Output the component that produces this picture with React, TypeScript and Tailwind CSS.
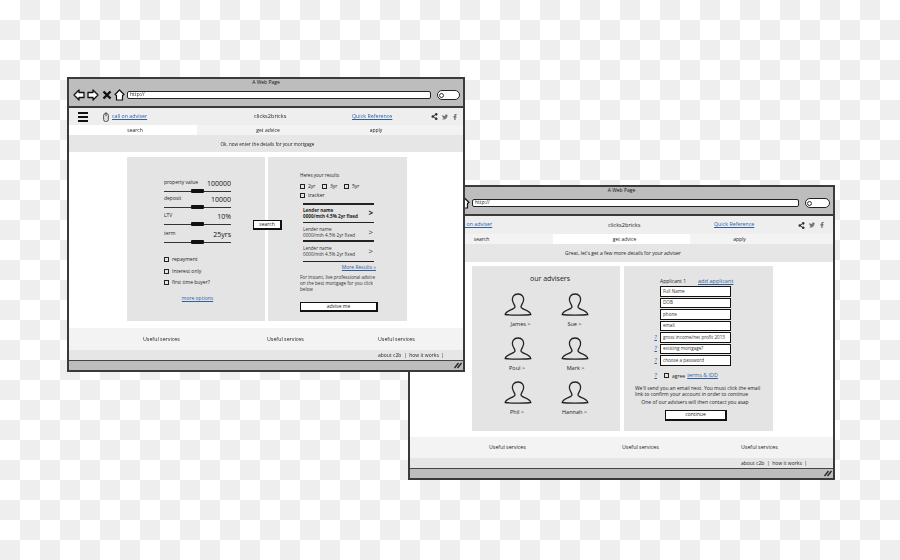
import type { ReactNode } from "react";
import { FaFacebookF, FaShareAlt, FaTwitter } from "react-icons/fa";

function Back({ flip }: { flip?: boolean }) {
  return (
    <svg width="12" height="12" viewBox="0 0 12 12" className={flip ? "-scale-x-100" : ""}>
      <path d="M1 6 L6 1 V3.5 H11 V8.5 H6 V11 Z" fill="#fff" stroke="#111" strokeWidth="1.3" strokeLinejoin="round" />
    </svg>
  );
}

function BrowserBar({ barClass, urlClass, pillClass }: { barClass: string; urlClass: string; pillClass: string }) {
  return (
    <div className="h-[29px] shrink-0 bg-[#bdbdbd] border-b-2 border-[#3a3a3a] flex flex-col">
      <div className="h-[7px] text-center text-[5px] leading-[7px] text-[#111]">A Web Page</div>
      <div className={`flex items-center mt-[3px] ${barClass}`}>
        <Back />
        <div className="w-[2px]" />
        <Back flip />
        <svg width="10" height="10" viewBox="0 0 10 10" className="ml-[3px]">
          <path d="M1.5 1.5 L8.5 8.5 M8.5 1.5 L1.5 8.5" stroke="#111" strokeWidth="2.4" />
        </svg>
        <svg width="11" height="12" viewBox="0 0 11 12" className="ml-[2px]">
          <path d="M5.5 1 L10 5.5 L8.5 6.5 V11 H2.5 V6.5 L1 5.5 Z" fill="#fff" stroke="#111" strokeWidth="1.2" strokeLinejoin="round" />
        </svg>
        <div className={`h-[8px] ml-[2px] bg-white border-[1.5px] border-[#222] rounded-[2px] flex items-center pl-[2px] text-[5px] text-[#222] ${urlClass}`}>
          http://
        </div>
        <div className={`h-[10px] ml-[6px] bg-white border-[1.5px] border-[#222] rounded-full flex items-center pl-[1px] ${pillClass}`}>
          <div className="w-[5px] h-[5px] rounded-full border border-[#333]" />
        </div>
      </div>
    </div>
  );
}

function SocialIcons() {
  return (
    <div className="flex items-center gap-[4px] text-[#333]">
      <FaShareAlt size={7} />
      <FaTwitter size={6} className="text-[#777]" />
      <FaFacebookF size={6} className="text-[#666]" />
    </div>
  );
}

function Hamburger() {
  return (
    <div className="w-[10px] flex flex-col gap-[2px]">
      <div className="h-[2px] bg-[#111]" />
      <div className="h-[2px] bg-[#111]" />
      <div className="h-[2px] bg-[#111]" />
    </div>
  );
}

function MouseIcon() {
  return (
    <svg width="6" height="10" viewBox="0 0 6 10">
      <rect x="0.6" y="1.5" width="4.8" height="8" rx="2" fill="#ddd" stroke="#333" strokeWidth="0.8" />
      <path d="M3 0 V4" stroke="#333" strokeWidth="0.8" />
    </svg>
  );
}

function Link({ children, className = "" }: { children: ReactNode; className?: string }) {
  return <span className={`text-[#2f5f9e] underline whitespace-nowrap ${className}`}>{children}</span>;
}

function Slider({ label, value, labelClass }: { label: string; value: string; labelClass: string }) {
  return (
    <div className="w-[67px]">
      <div className={`flex justify-between items-end ${labelClass}`}>
        <span className="text-[5px] leading-[8px] mb-[2px]">{label}</span>
        <span className="text-[7px] leading-[9px] text-[#111]">{value}</span>
      </div>
      <div className="flex items-center h-[6px]">
        <div className="w-[27px] h-px bg-[#333]" />
        <div className="w-[13px] h-[4px] bg-[#111] rounded-[1px]" />
        <div className="flex-1 h-px bg-[#333]" />
      </div>
    </div>
  );
}

function Check({ label, className = "" }: { label: string; className?: string }) {
  return (
    <div className={`flex items-center gap-[3px] text-[5px] leading-[6px] ${className}`}>
      <div className="w-[5px] h-[5px] border border-[#222]" />
      <span>{label}</span>
    </div>
  );
}

function Lender({ bold, rowClass }: { bold?: boolean; rowClass: string }) {
  return (
    <div className={`w-[71px] flex items-center justify-between ml-[3px] ${rowClass} ${bold ? "font-bold" : "text-[#333]"}`}>
      <div className="text-[4.6px] leading-[6px] whitespace-nowrap">
        <div>Lender name</div>
        <div>0000/mth 4.5% 2yr fixed</div>
      </div>
      <span className="text-[8px] leading-[8px] mr-[1px]">&gt;</span>
    </div>
  );
}

function Rule() {
  return <div className="w-[71px] h-[1.5px] ml-[3px] bg-[#222]" />;
}

function SketchButton({ children, className = "" }: { children: ReactNode; className?: string }) {
  return (
    <div className={`bg-white border border-[#111] border-r-2 border-b-2 flex items-center justify-center text-[5px] text-[#222] ${className}`}>
      {children}
    </div>
  );
}

function Person({ name, labelClass }: { name: string; labelClass: string }) {
  return (
    <div className="h-[44px] w-[57px] flex flex-col items-center">
      <svg width="28" height="23" viewBox="0 0 28 23">
        <path
          d="M14 1 C9.5 1 8 4.5 8.5 7.5 C9 10.5 11 12 11 14 C11 16.5 2 17 1.2 21.5 C5 22.3 23 22.3 26.8 21.5 C26 17 17 16.5 17 14 C17 12 19 10.5 19.5 7.5 C20 4.5 18.5 1 14 1 Z"
          fill="none"
          stroke="#222"
          strokeWidth="1.3"
        />
      </svg>
      <span className={`text-[5.5px] leading-[8px] mt-[4px] whitespace-nowrap text-[#222] ${labelClass}`}>{name}</span>
    </div>
  );
}

function Field({ label, help }: { label: string; help?: boolean }) {
  return (
    <div className="flex items-center h-[10.5px] mb-px">
      <span className="w-[25px] pr-[3px] text-right text-[6px] text-[#2f5f9e] underline">{help ? "?" : ""}</span>
      <div className="w-[71px] h-[10.5px] bg-white border border-[#111] border-r-[1.5px] border-b-[1.5px] flex items-center pl-[2px] text-[4.6px] text-[#333] whitespace-nowrap">
        {label}
      </div>
    </div>
  );
}

function StatusBar() {
  return (
    <div className="flex-1 bg-[#bdbdbd] border-t border-[#444] flex items-center justify-end pr-[1px]">
      <svg width="8" height="7" viewBox="0 0 8 7">
        <path d="M0.5 6 L4.5 1 M3.5 6 L7.5 1" stroke="#222" strokeWidth="1.3" />
      </svg>
    </div>
  );
}

function FirstWindow() {
  return (
    <div className="absolute z-10 left-[67px] top-[77px] w-[398px] h-[295px] border-2 border-[#3a3a3a] bg-white flex flex-col">
      <BrowserBar barClass="pl-[4px]" urlClass="w-[304px]" pillClass="w-[23px]" />
      <div className="h-[17px] shrink-0 bg-[#eeeeee] flex items-center text-[5.3px] text-[#222]">
        <div className="w-[185px] flex items-center shrink-0">
          <div className="ml-[9px]"><Hamburger /></div>
          <div className="ml-[15px]"><MouseIcon /></div>
          <Link className="ml-[3px]">call on adviser</Link>
        </div>
        <span className="w-[98px] shrink-0 text-[5.6px]">clicks2bricks</span>
        <Link className="w-[79px] shrink-0">Quick Reference</Link>
        <SocialIcons />
      </div>
      <div className="h-[10px] shrink-0 flex text-[5px] leading-[10px] text-center text-[#222]">
        <div className="w-[128px] bg-white pl-[4px]">search</div>
        <div className="w-[134px] bg-[#f3f3f3] pl-[8px]">get advice</div>
        <div className="flex-1 bg-[#f3f3f3] pr-[42px]">apply</div>
      </div>
      <div className="h-[17px] shrink-0 bg-[#e6e6e6] flex items-center justify-center pl-[3px] pt-[1px] text-[4.6px] text-[#222]">
        Ok, now enter the details for your mortgage
      </div>
      <div className="h-[176px] shrink-0 relative flex gap-[3px] pl-[58px] pt-[5px] text-[#222]">
        <div className="w-[138px] h-[164px] bg-[#e4e4e4] pl-[37px] pt-[19px]">
          <Slider label="property value" value="100000" labelClass="h-[12px]" />
          <Slider label="deposit" value="10000" labelClass="h-[10px]" />
          <Slider label="LTV" value="10%" labelClass="h-[11px]" />
          <Slider label="term" value="25yrs" labelClass="h-[12px]" />
          <Check label="repayment" className="mt-[11px]" />
          <Check label="Interest only" className="mt-[6px]" />
          <Check label="first time buyer?" className="mt-[5px]" />
          <div className="mt-[10px] w-[67px] text-center text-[5px] leading-[6px]"><Link>more options</Link></div>
        </div>
        <div className="w-[139px] h-[164px] bg-[#e4e4e4] pl-[32px] pt-[15px]">
          <div className="text-[4.6px] leading-[6px]">Heres your results</div>
          <div className="flex mt-[5px]">
            <Check label="2yr" className="w-[22px]" />
            <Check label="3yr" className="w-[22px]" />
            <Check label="5yr" />
          </div>
          <Check label="tracker" className="mt-[3px]" />
          <div className="h-[5px]" />
          <Rule />
          <Lender bold rowClass="h-[17px]" />
          <Rule />
          <Lender rowClass="h-[17px]" />
          <Rule />
          <Lender rowClass="h-[19px]" />
          <Rule />
          <div className="w-[76px] text-right text-[5px] leading-[8px] mt-px"><Link>More Results »</Link></div>
          <div className="w-[78px] text-[4.6px] leading-[6px] mt-[3px] text-[#333]">
            For instant, live professional advice on the best mortgage for you click below
          </div>
          <SketchButton className="w-[78px] h-[10px] mt-[10px]">advise me</SketchButton>
        </div>
        <SketchButton className="absolute left-[184px] top-[68px] w-[29px] h-[10px]">search</SketchButton>
      </div>
      <div className="h-[22px] shrink-0 bg-[#f3f3f3] flex items-center pl-[74px] pt-[1px] text-[5.3px] text-[#222]">
        <div className="w-[124px]">Useful services</div>
        <div className="w-[111px]">Useful services</div>
        <div>Useful services</div>
      </div>
      <div className="h-[10px] shrink-0 bg-[#e6e6e6] pl-[309px] text-[5px] leading-[10px] text-[#222] whitespace-nowrap">
        about c2b &nbsp;|&nbsp; how it works &nbsp;|
      </div>
      <StatusBar />
    </div>
  );
}

function SecondWindow() {
  return (
    <div className="absolute left-[408px] top-[185px] w-[427px] h-[295px] border-2 border-[#3a3a3a] bg-white flex flex-col">
      <BrowserBar barClass="pl-[8px]" urlClass="w-[327px]" pillClass="w-[25px]" />
      <div className="h-[18px] shrink-0 bg-[#eeeeee] flex items-center text-[5.3px] text-[#222]">
        <div className="w-[198px] flex items-center shrink-0">
          <div className="ml-[9px]"><Hamburger /></div>
          <div className="ml-[19px]"><MouseIcon /></div>
          <Link className="ml-[3px]">call on adviser</Link>
        </div>
        <span className="w-[106px] shrink-0 text-[5.6px]">clicks2bricks</span>
        <Link className="w-[84px] shrink-0">Quick Reference</Link>
        <SocialIcons />
      </div>
      <div className="h-[10px] shrink-0 flex text-[5px] leading-[10px] text-center text-[#222]">
        <div className="w-[143px] bg-[#f3f3f3]">search</div>
        <div className="w-[137px] bg-white pl-[6px]">get advice</div>
        <div className="flex-1 bg-[#f3f3f3] pr-[44px]">apply</div>
      </div>
      <div className="h-[18px] shrink-0 bg-[#e6e6e6] flex items-center justify-center pl-[3px] pt-[1px] text-[5px] text-[#222]">
        Great, let's get a few more details for your adviser
      </div>
      <div className="h-[175px] shrink-0 flex gap-[4px] pl-[62px] pt-[4px] text-[#222]">
        <div className="w-[148px] h-[165px] bg-[#e4e4e4] pt-[8px] pl-[17px]">
          <div className="w-[114px] ml-[4px] text-center text-[7px] leading-[9px]">our advisers</div>
          <div className="grid grid-cols-[57px_57px] mt-[10px]">
            <Person name="James >" labelClass="ml-[6px]" />
            <Person name="Sue >" labelClass="" />
            <Person name="Poul >" labelClass="-ml-[1px]" />
            <Person name="Mark >" labelClass="ml-[2px]" />
            <Person name="Phil >" labelClass="-ml-[1px]" />
            <Person name="Hannah >" labelClass="" />
          </div>
        </div>
        <div className="w-[149px] h-[165px] bg-[#e4e4e4] pl-[11px] pt-[11px]">
          <div className="flex items-center h-[9px] pl-[25px]">
            <span className="text-[5px] w-[38px]">Applicant 1</span>
            <Link className="text-[5.6px]">add applicant</Link>
          </div>
          <Field label="Full Name" />
          <Field label="DOB" />
          <Field label="phone" />
          <Field label="email" />
          <Field label="gross income/net profit 2013" help />
          <Field label="existing mortgage?" help />
          <Field label="choose a password" help />
          <div className="flex items-center h-[10px] mt-[5px]">
            <span className="w-[25px] pr-[3px] text-right text-[6px] text-[#2f5f9e] underline">?</span>
            <Check label="agree" className="ml-[4px]" />
            <Link className="text-[5.4px] ml-[2px]">terms &amp; IDD</Link>
          </div>
          <div className="w-[130px] text-[5px] leading-[6.5px] mt-[4px] text-[#222]">
            We'll send you an email next. You must click the email link to confirm your account in order to continue
          </div>
          <div className="w-[120px] text-center text-[5px] leading-[6.5px] mt-[1.5px] text-[#222] whitespace-nowrap">
            One of our advisers will then contact you asap
          </div>
          <SketchButton className="w-[62px] h-[11px] ml-[30px] mt-[4px]">continue</SketchButton>
        </div>
      </div>
      <div className="h-[21px] shrink-0 bg-[#f3f3f3] flex items-center pl-[79px] pt-[1px] text-[5.3px] text-[#222]">
        <div className="w-[133px]">Useful services</div>
        <div className="w-[119px]">Useful services</div>
        <div>Useful services</div>
      </div>
      <div className="h-[10px] shrink-0 bg-[#e6e6e6] pl-[331px] text-[5px] leading-[10px] text-[#222] whitespace-nowrap">
        about c2b &nbsp;|&nbsp; how it works &nbsp;|
      </div>
      <StatusBar />
    </div>
  );
}

// transparency checker behind the two windows
function Checker() {
  return (
    <svg width="900" height="560" className="absolute left-0 top-0">
      <defs>
        <pattern id="checker" width="40" height="40" patternUnits="userSpaceOnUse">
          <rect width="40" height="40" fill="#ffffff" />
          <rect x="20" y="0" width="20" height="20" fill="#eeeeee" />
          <rect x="0" y="20" width="20" height="20" fill="#eeeeee" />
        </pattern>
      </defs>
      <rect width="900" height="560" fill="url(#checker)" />
    </svg>
  );
}

export default function App() {
  return (
    <div className="relative w-[900px] h-[560px] overflow-hidden blur-[0.4px] font-['Open_Sans',sans-serif]">
      <Checker />
      <SecondWindow />
      <FirstWindow />
    </div>
  );
}
